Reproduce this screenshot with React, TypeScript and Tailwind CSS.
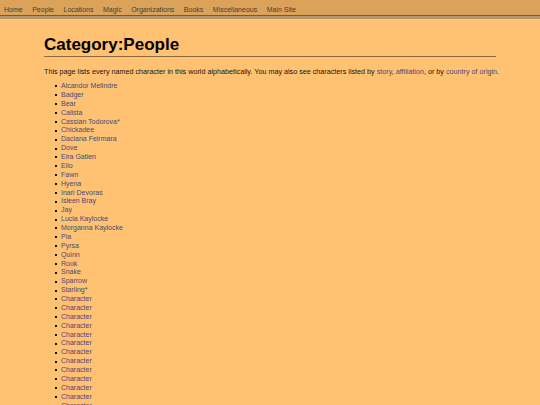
const NAV = ["Home", "People", "Locations", "Magic", "Organizations", "Books", "Miscellaneous", "Main Site"];

const PEOPLE = [
  "Alcandor Melindre",
  "Badger",
  "Bear",
  "Calista",
  "Cassian Todorova*",
  "Chickadee",
  "Daciana Feirmara",
  "Dove",
  "Eira Gatien",
  "Elio",
  "Fawn",
  "Hyena",
  "Inari Devoras",
  "Isleen Bray",
  "Jay",
  "Lucia Kaylocke",
  "Morganna Kaylocke",
  "Pia",
  "Pyrsa",
  "Quinn",
  "Rook",
  "Snake",
  "Sparrow",
  "Starling*",
  ...Array(16).fill("Character"),
];

export default function App() {
  return (
    <div className="min-h-[405px] bg-[#ffc272] font-['Liberation_Sans',Arial,sans-serif] text-[#1a1208]">
      <nav className="flex h-[16px] items-center gap-[9.5px] border-b border-[#7a5a34] bg-[#dba25a] px-[4px] pt-[5px] text-[7px] text-[#4a3c32]">
        {NAV.map((n) => (
          <a key={n} href="#">
            {n}
          </a>
        ))}
      </nav>
      <div className="h-[3px] bg-[#b8946a]" />
      <main className="mx-[44px] pt-[16px]">
        <h1 className="border-b border-[#8a6a3e] pb-[1px] text-[17px] font-bold leading-[20px] text-black">
          Category:People
        </h1>
        <p className="mt-[10px] whitespace-nowrap text-[7.2px] leading-[9px] text-[#1a1208]">
          This page lists every named character in this world alphabetically. You may also see characters listed by{" "}
          <a href="#" className="text-[#48487a]">story</a>,{" "}
          <a href="#" className="text-[#48487a]">affiliation</a>, or by{" "}
          <a href="#" className="text-[#48487a]">country of origin</a>.
        </p>
        <ul className="mt-[6px] pl-[11px] text-[7px] leading-[8.87px] text-[#48487a]">
          {PEOPLE.map((p, i) => (
            <li key={i} className="flex items-center gap-[4px]">
              <span className="h-[2px] w-[2px] bg-[#1a1208]" />
              <a href="#">{p}</a>
            </li>
          ))}
        </ul>
      </main>
    </div>
  );
}
